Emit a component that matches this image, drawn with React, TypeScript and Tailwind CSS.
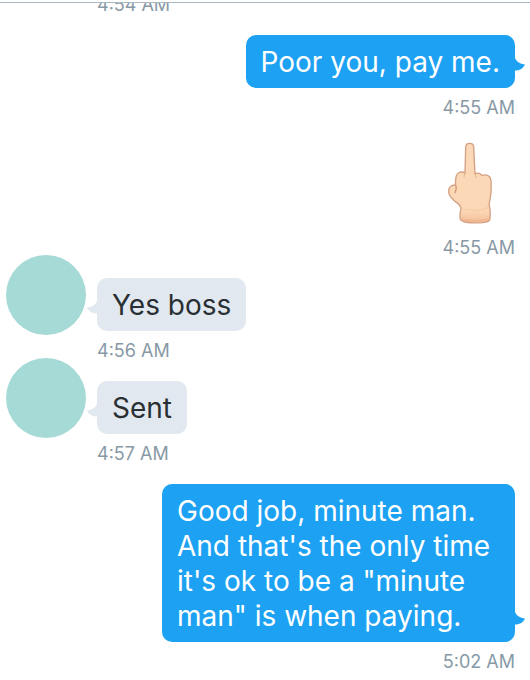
import React from 'react';
import clsx from 'clsx';

interface Message {
    id: number;
    from: 'me' | 'them';
    time: string;
    text?: string;
}

const messages: Message[] = [
    { id: 1, from: 'me', text: 'Poor you, pay me.', time: '4:55 AM' },
    { id: 2, from: 'me', time: '4:55 AM' },
    { id: 3, from: 'them', text: 'Yes boss', time: '4:56 AM' },
    { id: 4, from: 'them', text: 'Sent', time: '4:57 AM' },
    {
        id: 5,
        from: 'me',
        text: 'Good job, minute man. And that\'s the only time it\'s ok to be a "minute man" is when paying.',
        time: '5:02 AM',
    },
];

const HandEmoji = () => (
    <svg className="w-[90px] h-[90px]" viewBox="-15 24 270 270" role="img" aria-label="Middle finger">
        <defs>
            <linearGradient id="skin" x1="0" y1="0" x2="0" y2="1">
                <stop offset="0" stopColor="#fbd8b8" />
                <stop offset="0.85" stopColor="#fbd7b5" />
                <stop offset="1" stopColor="#f3bd98" />
            </linearGradient>
        </defs>
        <path
            d="M107 51 C107 43 112 40 119 40 C127 40 131 44 131 51 L135 131 C143 128 151 130 156 136 C170 132 182 138 183 151 C184 166 184 190 180 208 C178 215 177 221 178 228 C181 238 181 254 180 266 C179 273 173 276 164 277 C145 279 121 279 104 276 C94 274 90 270 90 262 C90 251 91 243 93 236 C91 230 91 226 84 221 C70 211 58 201 56 187 C54 173 62 165 76 165 C77 155 76 145 79 137 C83 126 96 123 105 129 Z"
            fill="url(#skin)"
            stroke="#d3a183"
            strokeWidth="4"
            strokeLinejoin="round"
        />
        <g fill="none" strokeLinecap="round">
            <path d="M77 165 C80 172 78 181 75 188" stroke="#d19a78" strokeWidth="4" />
            <path d="M105 130 C103 133 102 137 102 141" stroke="#e3b493" strokeWidth="3" />
            <path d="M135 132 C137 135 138 138 138 142" stroke="#e3b493" strokeWidth="3" />
            <path d="M97 237 C112 243 157 244 175 231" stroke="#f6cba8" strokeWidth="4" />
            <path d="M97 268 C116 274 154 274 174 268" stroke="#eba982" strokeWidth="5" opacity="0.5" />
        </g>
    </svg>
);

const Tail = ({ mine }: { mine: boolean }) => (
    <svg
        className={clsx(
            'absolute bottom-[17px] w-[10px] h-[13px]',
            mine ? 'left-full text-[#1da1f2]' : 'right-full text-[#e1e8ef] -scale-x-100'
        )}
        viewBox="0 0 10 13"
        aria-hidden="true"
    >
        <path d="M0 0 C2 4 5 6 10 6.5 C8 11 4 12.5 0 12.5 Z" fill="currentColor" />
    </svg>
);

const Time = ({ children }: { children: React.ReactNode }) => (
    <time className="block text-[18px] leading-[22px] text-[#8899a6]">{children}</time>
);

const MessageRow = ({ message }: { message: Message }) => {
    const mine = message.from === 'me';

    return (
        <li className={clsx('flex items-start', mine ? 'justify-end' : 'gap-[11px]')}>
            {/* Avatar hangs above and slightly below its bubble */}
            {!mine && <div className="size-20 shrink-0 rounded-full bg-[#a6dad6] -mt-[23px]" />}
            <div className={clsx('flex flex-col gap-[9px]', mine ? 'items-end' : 'items-start')}>
                {message.text ? (
                    <p
                        className={clsx(
                            'relative max-w-[353px] rounded-[10px] px-[15px] pt-[10px] pb-[8px] text-[28px] leading-[35px]',
                            mine ? 'bg-[#1da1f2] text-white' : 'bg-[#e1e8ef] text-[#292f33]'
                        )}
                    >
                        {message.text}
                        <Tail mine={mine} />
                    </p>
                ) : (
                    <HandEmoji />
                )}
                <Time>{message.time}</Time>
            </div>
        </li>
    );
};

const App: React.FC = () => {
    return (
        <div className="min-h-screen bg-white pt-[2px] font-['Inter','Liberation_Sans',sans-serif]">
            {/* Thread, scrolled part way under the header line */}
            <main className="overflow-hidden border-t border-[#aab8c2]">
                <div className="-mt-[9px] flex flex-col gap-[19px] pr-[15px] pl-[6px]">
                    <div className="pl-[91px]">
                        <Time>4:54 AM</Time>
                    </div>
                    <ul className="flex flex-col gap-[19px]">
                        {messages.map((message) => (
                            <MessageRow key={message.id} message={message} />
                        ))}
                    </ul>
                </div>
            </main>
        </div>
    );
};

export default App;
